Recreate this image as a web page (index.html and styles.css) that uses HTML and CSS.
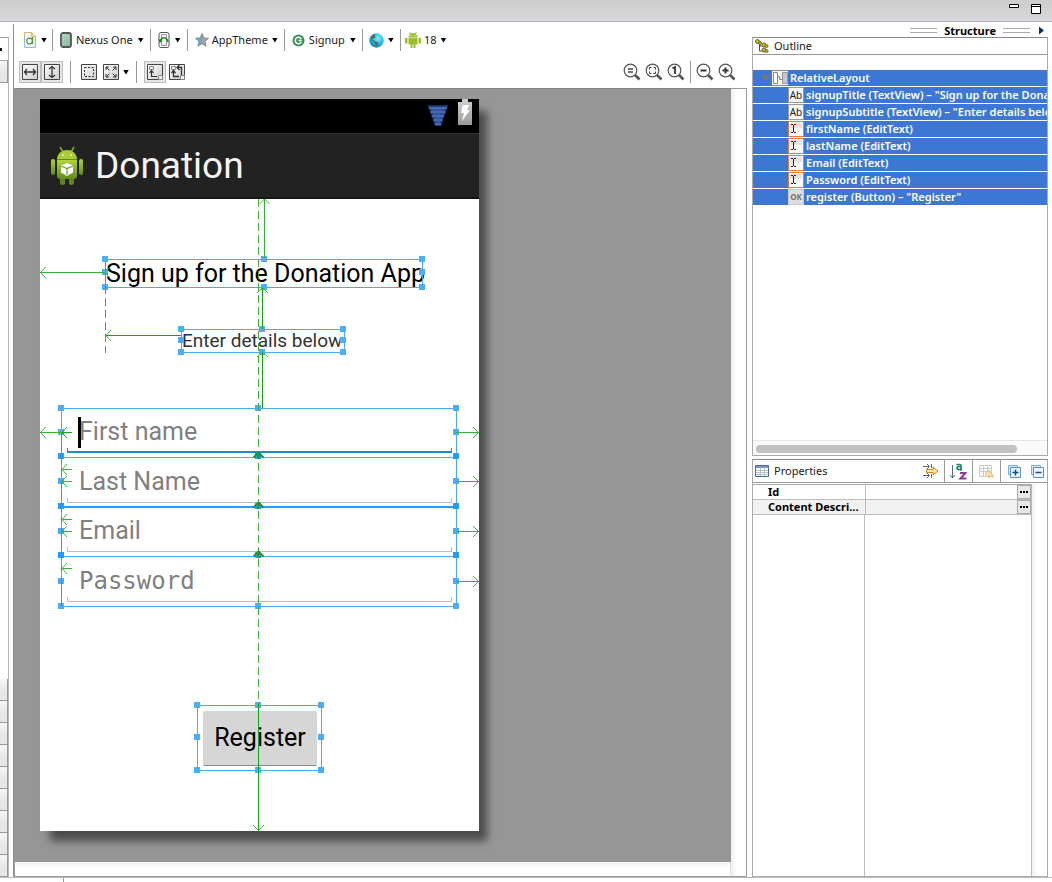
FILE: index.html
```html
<!DOCTYPE html>
<html lang="en">
<head>
<meta charset="utf-8">
<title>Layout editor</title>
<link rel="stylesheet" href="styles.css">
</head>
<body>
<svg class="defs" aria-hidden="true">
  <defs>
    <linearGradient id="tile" x1="0" y1="0" x2="1" y2="1"><stop offset="0" stop-color="#fff"/><stop offset="1" stop-color="#ccc"/></linearGradient>
    <linearGradient id="screen" x1="0" y1="0" x2="1" y2="1"><stop offset="0" stop-color="#b5d8c4"/><stop offset="1" stop-color="#86b79c"/></linearGradient>
    <linearGradient id="droid" x1="0" y1="0" x2="0" y2="1"><stop offset="0" stop-color="#b4d334"/><stop offset="1" stop-color="#5f8a1d"/></linearGradient>
    <radialGradient id="sea" cx=".6" cy=".35" r=".7"><stop offset="0" stop-color="#7ff0ff"/><stop offset=".6" stop-color="#22b4e6"/><stop offset="1" stop-color="#1773b8"/></radialGradient>
    <linearGradient id="batt" x1="0" y1="0" x2="0" y2="1"><stop offset="0" stop-color="#d0d0d0"/><stop offset="1" stop-color="#9b9b9b"/></linearGradient>
    <symbol id="lens" viewBox="0 0 18 18"><path d="M12 12l4.500 4.500" stroke="#555" stroke-width="2.600"/><circle cx="7.500" cy="7.500" r="6.300" fill="#fff" stroke="#555" stroke-width="1.200"/></symbol>
    <symbol id="edit" viewBox="0 0 16 16"><rect x=".5" y=".5" width="15" height="15" rx="1" fill="#fafafa" stroke="#f27935"/><path d="M2 2h12v5H2z" fill="#e4e4e4"/><path d="M3 3.500h2M6 3.500h2M3 11.500h2M6 11.500h2M5.500 4v7" stroke="#222" fill="none"/></symbol>
  </defs>
</svg>

<header class="titlebar">
  <button class="win" aria-label="Minimize"><svg width="10" height="12" viewBox="0 0 10 12"><path d="M.5 2.500h9v3h-9z" fill="#fff" stroke="#000"/></svg></button>
  <button class="win" aria-label="Maximize"><svg width="10" height="12" viewBox="0 0 10 12"><path d="M.5 2.500h9v9h-9zM0 4.500h10" fill="#fff" stroke="#000"/></svg></button>
</header>

<main class="workbench">
  <aside class="palette" aria-label="Palette">
    <div class="palette-head"></div>
    <div class="drawer"></div>
    <div class="palette-space"></div>
    <div class="drawer"></div><div class="drawer"></div><div class="drawer"></div><div class="drawer"></div><div class="drawer"></div><div class="drawer"></div><div class="drawer"></div><div class="drawer"></div><div class="drawer"></div>
  </aside>

  <section class="editor" aria-label="Layout editor">
    <div class="toolbar">
      <button class="menu menu-first" aria-label="Configuration"><svg width="12" height="16" viewBox="0 0 12 16"><path d="M.5.500h7l4 4v11H.5z" fill="#eef3fb" stroke="#9db5d6"/><path d="M.5 5V.500h7l4 4" fill="none" stroke="#e5b36b"/><path d="M7.500.500v4h4z" fill="#f7d9a8" stroke="#e5b36b"/><circle cx="5.500" cy="9" r="2.800" fill="#fff" stroke="#4f9b33" stroke-width="1.200"/><path d="M8.500 5v7" stroke="#4f9b33" stroke-width="1.200"/></svg><i class="arrow"></i></button>
      <button class="menu"><svg width="12" height="16" viewBox="0 0 12 16"><rect x="1" y="1" width="10" height="14" rx="2" fill="url(#screen)" stroke="#555" stroke-width="1.800"/></svg><span>Nexus One</span><i class="arrow"></i></button>
      <button class="menu" aria-label="Orientation"><svg width="12" height="16" viewBox="0 0 12 16"><rect x="1" y=".5" width="10" height="15" rx="2" fill="#fff" stroke="#555"/><path d="M3.500 2.500h5v11h-5z" fill="#f4f4f4" stroke="#999"/><path d="M2.500 9c0-4.500 6.500-4.500 7.500 1" fill="none" stroke="#159015" stroke-width="1.500"/><path d="M0 7.500h5L2 11z" fill="#159015"/></svg><i class="arrow"></i></button>
      <button class="menu menu-theme"><svg width="14" height="14" viewBox="0 0 14 14"><path d="M7 .5l1.900 4.400 4.600.400-3.500 3.100 1.100 4.800L7 10.700l-4.100 2.500L4 8.400.500 5.300l4.600-.400z" fill="#a4a4a4" stroke="#888"/><path d="M7 1v9.500l-3.500 2L4.500 8l-3-2.500 4-.500z" fill="#4fb3d9"/></svg><span>AppTheme</span><i class="arrow"></i></button>
      <button class="menu"><svg width="13" height="13" viewBox="0 0 14 14"><circle cx="7" cy="7" r="6.500" fill="#3c9158"/><path d="M10 5.200A3.500 3.500 0 1 0 10 8.800M10.500 7H7" fill="none" stroke="#fff" stroke-width="1.700"/></svg><span>Signup</span><i class="arrow"></i></button>
      <button class="menu menu-tight" aria-label="Locale"><svg width="15" height="15" viewBox="0 0 15 15"><circle cx="7.500" cy="7.500" r="7.200" fill="url(#sea)"/><path d="M1.500 4c1.500-2 3-3 5-3l-1 2 1.500 1-2 1.500-1 0-.5 1.500 3 1.500 2.500.5.500 1.500-2 3.500-1-.5-.5-3L3 7.500z" fill="#47795f"/></svg><i class="arrow"></i></button>
      <button class="menu menu-last"><svg width="16" height="16" viewBox="0 0 16 16"><path d="M3.500 5.500a4.500 4.500 0 0 1 9 0zM3.500 6h9v6.500h-2V16h-2v-3.500h-1V16h-2v-3.500h-2zM0 6h2.500v5.500H0zM13.500 6H16v5.500h-2.500z" fill="#99c02c"/><path d="M4.500 0l1.500 2M11.500 0L10 2" stroke="#99c02c"/><path d="M5.500 3h1v1h-1zM9.500 3h1v1h-1z" fill="#fff"/></svg><span>18</span><i class="arrow"></i></button>
    </div>

    <div class="toolbar toolbar-second">
      <div class="group">
        <button class="tool on" aria-label="Fill width" aria-pressed="true"><svg width="16" height="16" viewBox="0 0 16 16"><path d="M.5.500h15v15H.5z" fill="url(#tile)" stroke="#444"/><path d="M2.500 8h11M5 5L2.500 8 5 11M11 5l2.500 3-2.500 3" fill="none" stroke="#333" stroke-width="1.300"/></svg></button>
        <button class="tool on" aria-label="Fill height" aria-pressed="true"><svg width="16" height="16" viewBox="0 0 16 16"><path d="M.5.500h15v15H.5z" fill="url(#tile)" stroke="#444"/><path d="M8 2.500v11M5 5l3-2.500L11 5M5 11l3 2.500 3-2.500" fill="none" stroke="#333" stroke-width="1.300"/></svg></button>
      </div>
      <div class="group">
        <button class="tool" aria-label="Margins"><svg width="16" height="16" viewBox="0 0 16 16"><path d="M.5.500h15v15H.5z" fill="url(#tile)" stroke="#444"/><path d="M3.500 3.500h9v9h-9z" fill="none" stroke="#333" stroke-dasharray="2 1.500"/></svg></button>
        <button class="tool" aria-label="Gravity"><svg width="16" height="16" viewBox="0 0 16 16"><path d="M.5.500h15v15H.5z" fill="url(#tile)" stroke="#444"/><path d="M3 3l3.500 3.500M13 3L9.500 6.500M3 13l3.500-3.500M13 13L9.500 9.500M3 6V3h3M10 3h3v3M3 10v3h3M10 13h3v-3" fill="none" stroke="#333"/></svg></button>
        <i class="arrow"></i>
      </div>
      <div class="group group-last">
        <button class="tool on" aria-label="Show structure" aria-pressed="true"><svg width="16" height="16" viewBox="0 0 16 16"><path d="M.5.500h15v15H.5z" fill="url(#tile)" stroke="#444"/><path d="M2.500 2.500h4v3h-4zM11.500 11.500h4v4h-4z" fill="#eee" stroke="#888"/><path d="M4.500 6.500v6H10M2.500 9l2-2.500 2 2.500" fill="none" stroke="#333" stroke-width="1.200"/></svg></button>
        <button class="tool" aria-label="Show constraints"><svg width="16" height="16" viewBox="0 0 16 16"><path d="M.5.500h15v15H.5z" fill="url(#tile)" stroke="#444"/><path d="M2.500 2.500h4v3h-4zM11.500 11.500h4v4h-4z" fill="#eee" stroke="#888"/><path d="M4.500 6.500v6H10M2.500 9l2-2.500 2 2.500M12.500 11V3.500H8.500M10.500 1L8 3.500 10.500 6" fill="none" stroke="#333" stroke-width="1.300"/></svg></button>
      </div>
      <div class="group zooms">
        <button class="tool" aria-label="Emulate real size"><svg width="18" height="18"><use href="#lens"/><path d="M5 6h5M5 9h5" stroke="#444" stroke-width="1.600"/></svg></button>
        <button class="tool" aria-label="Zoom to fit"><svg width="18" height="18"><use href="#lens"/><path d="M4.500 6.500v-2h2M8.500 4.500h2v2M4.500 8.500v2h2M8.500 10.500h2v-2" fill="none" stroke="#444"/></svg></button>
        <button class="tool" aria-label="Zoom to 100%"><svg width="18" height="18"><use href="#lens"/><path d="M5.500 5.500L8 4v7" fill="none" stroke="#333" stroke-width="1.800"/></svg></button>
      </div>
      <div class="group group-last">
        <button class="tool" aria-label="Zoom out"><svg width="18" height="18"><use href="#lens"/><path d="M4.500 7.500h6" stroke="#333" stroke-width="2"/></svg></button>
        <button class="tool" aria-label="Zoom in"><svg width="18" height="18"><use href="#lens"/><path d="M4.500 7.500h6M7.500 4.500v6" stroke="#333" stroke-width="2"/></svg></button>
      </div>
    </div>

    <div class="canvas-frame">
      <div class="canvas">
        <div class="phone">
          <div class="statusbar">
            <svg width="24" height="26" viewBox="0 0 24 26"><path d="M3 5h18l-6.500 19h-5z" fill="#2c4f96" stroke="#16305f" stroke-width="2"/><path d="M3 7h18M4.500 11h15M6 15h12M7.500 19h9M9 23h6" stroke="#4568b4" stroke-width="2.500"/></svg>
            <svg width="14" height="26" viewBox="0 0 14 26"><path d="M4 0h6v3h4v23H0V3h4z" fill="url(#batt)"/><path d="M5 6h6l-2 5h3L4 22l2-8H3z" fill="#fff"/></svg>
          </div>
          <div class="actionbar">
            <svg width="34" height="40" viewBox="0 0 34 40"><path d="M10 1l3 5M24 1l-3 5" stroke="#86a82c" stroke-width="1.500"/><path d="M7 13c1-12 19-12 20 0z" fill="#a9cc35"/><path d="M7 14h20v16q0 3-3 3H10q-3 0-3-3z" fill="url(#droid)"/><rect x="1" y="13" width="4" height="16" rx="2" fill="url(#droid)"/><rect x="29" y="13" width="4" height="16" rx="2" fill="url(#droid)"/><path d="M10 33h5v5q-3 2-5 0zM19 33h5v5q-3 2-5 0z" fill="#60851f"/><path d="M12 9h1.500M20.500 9H22" stroke="#fff" stroke-width="1.600"/><path d="M7 13.500h20" stroke="#648721"/><path d="M17 17l6 2.500v7L17 30l-6-3.500v-7z" fill="#fff"/><path d="M11 20l6 2.500 6-2.500M17 22.500V29" fill="none" stroke="#76982b" stroke-width="1.200"/></svg>
            <span>Donation</span>
          </div>
          <div class="screen">
            <h1 class="signup-title">Sign up for the Donation App</h1>
            <p class="signup-subtitle">Enter details below</p>
            <form class="fields">
              <div class="field field-focus"><input type="text" placeholder="First name" aria-label="First name"><span class="underline"></span></div>
              <div class="field"><input type="text" placeholder="Last Name" aria-label="Last Name"><span class="underline"></span></div>
              <div class="field"><input type="text" placeholder="Email" aria-label="Email"><span class="underline"></span></div>
              <div class="field field-mono"><input type="text" placeholder="Password" aria-label="Password"><span class="underline"></span></div>
              <button type="button" class="register">Register</button>
            </form>
          </div>
          <svg class="guides" viewBox="40 99 439 732" aria-hidden="true">
            <g class="frame">
              <path d="M105.500 259.500h317v28h-317zM181.500 329.500h163v23h-163zM61.500 408.500h395v198h-395zM197.500 705.500h124v65h-124zM61 457.500h395M61 556.500h395"/>
              <path class="frame-strong" d="M61 507h395"/>
            </g>
            <g class="handles">
              <path d="M102 256h6v6h-6zM261 256h6v6h-6zM419 256h6v6h-6zM102 269h6v6h-6zM419 269h6v6h-6zM102 284h6v6h-6zM261 284h6v6h-6zM419 284h6v6h-6z"/>
              <path d="M178 326h6v6h-6zM259 326h6v6h-6zM340 326h6v6h-6zM178 337h6v6h-6zM340 337h6v6h-6zM178 349h6v6h-6zM259 349h6v6h-6zM340 349h6v6h-6z"/>
              <path d="M58 405h6v6h-6zM255 405h6v6h-6zM453 405h6v6h-6zM58 429h6v6h-6zM453 429h6v6h-6zM58 478h6v6h-6zM453 478h6v6h-6zM58 528h6v6h-6zM453 528h6v6h-6zM58 578h6v6h-6zM453 578h6v6h-6zM58 603h6v6h-6zM255 603h6v6h-6zM453 603h6v6h-6z"/>
              <path class="solid" d="M58 453h6v6h-6zM255 453h6v6h-6zM453 453h6v6h-6zM58 503h6v6h-6zM255 503h6v6h-6zM453 503h6v6h-6zM58 552h6v6h-6zM255 552h6v6h-6zM453 552h6v6h-6z"/>
              <path d="M194 702h6v6h-6zM255 702h6v6h-6zM318 702h6v6h-6zM194 734h6v6h-6zM318 734h6v6h-6zM194 767h6v6h-6zM255 767h6v6h-6zM318 767h6v6h-6z"/>
            </g>
            <g class="links">
              <path class="dashed" d="M258.500 199v504M105.500 262v91M61.500 432v174"/>
              <path d="M264.500 258v-59M259.500 204l5-5 5 5"/>
              <path d="M105 272.500H40M45.500 267l-5 5.500 5 5.500M110 267l-5 5.500 5 5.500"/>
              <path class="strong" d="M181 335.500h-75"/><path d="M111 330l-5 5.500 5 5.500"/>
              <path class="strong" d="M262.500 329v-41M262.500 408v-56"/><path d="M257 293l5.500-5 5.500 5M257 357l5.500-5 5.500 5"/>
              <path d="M61 432.500H40M45.500 427l-5 5.500 5 5.500"/>
              <path class="strong" d="M72 432.500H62M67 427l-5 5.500 5 5.500"/>
              <path d="M72 469.500H62M67 464l-5 5.500 5 5.500M72 481.500H62M67 476l-5 5.500 5 5.500M72 519.500H62M67 514l-5 5.500 5 5.500M72 531.500H62M67 526l-5 5.500 5 5.500M72 568.500H62M67 563l-5 5.500 5 5.500"/>
              <path d="M456 432.500h23M473 427l5.500 5.500-5.500 5.500M456 481.500h23M473 476l5.500 5.500-5.500 5.500M456 531.500h23M473 526l5.500 5.500-5.500 5.500M456 581.500h23M473 576l5.500 5.500-5.500 5.500"/>
              <path class="tip" d="M253.500 457.500l5-5 5 5M258.500 452v7M253.500 507.500l5-5 5 5M258.500 502v7M253.500 556.500l5-5 5 5M258.500 551v7"/>
              <path class="strong" d="M258.500 703v128"/><path d="M253 825l5.500 5.500 5.500-5.500"/>
            </g>
          </svg>
        </div>
      </div>
      <div class="scroll-v"></div>
      <div class="scroll-h"></div>
    </div>
  </section>

  <aside class="structure">
    <div class="structure-head"><i class="grip"></i><b>Structure</b><i class="grip"></i><button class="expand" aria-label="Show menu"></button></div>

    <section class="outline">
      <h2 class="view-head"><svg width="14" height="14" viewBox="0 0 14 14"><path d="M4.500 5v7H8M4.500 7H8" fill="none" stroke="#234e8c"/><g fill="#c9bd3c" stroke="#6b6415"><circle cx="2.500" cy="2.500" r="2"/><circle cx="5" cy="4" r="1.500"/><circle cx="9" cy="6" r="2"/><circle cx="11.500" cy="7" r="1.500"/><circle cx="9" cy="11" r="2"/><circle cx="11.500" cy="12" r="1.500"/></g></svg>Outline</h2>
      <ul class="tree">
        <li class="root"><i class="twist"></i><svg width="16" height="16" viewBox="0 0 16 16"><path d="M0 0h16v16H0z" fill="#f4f4f4"/><path d="M1.500 2.500h4v11h-4z" fill="#fff" stroke="#888"/><path d="M10.500 2.500h5v11h-5z" fill="#c8c8c8" stroke="#999"/><path d="M6 6.500h1.500v3H10M0 .500h16M0 15.500h16" fill="none" stroke="#888"/></svg>RelativeLayout</li>
        <li><span class="ab">Ab</span>signupTitle (TextView) – "Sign up for the Donation App"</li>
        <li><span class="ab">Ab</span>signupSubtitle (TextView) – "Enter details below"</li>
        <li><svg width="16" height="16"><use href="#edit"/></svg>firstName (EditText)</li>
        <li><svg width="16" height="16"><use href="#edit"/></svg>lastName (EditText)</li>
        <li><svg width="16" height="16"><use href="#edit"/></svg>Email (EditText)</li>
        <li><svg width="16" height="16"><use href="#edit"/></svg>Password (EditText)</li>
        <li><span class="ok">OK</span>register (Button) – "Register"</li>
      </ul>
      <div class="outline-scroll"><i class="thumb"></i></div>
    </section>

    <section class="properties">
      <div class="view-head props-head">
        <svg width="14" height="12" viewBox="0 0 14 12"><path d="M.5.500h13v11H.5z" fill="#fff" stroke="#51678e"/><path d="M1 1h12v2H1z" fill="#7d96bd"/><path d="M1 5.500h12M1 7.500h12M1 9.500h12M5.500 3v8M9.500 3v8" stroke="#b5bfd0"/></svg>
        <h2>Properties</h2>
        <button class="ptool" aria-label="Advanced"><svg width="16" height="16" viewBox="0 0 16 16"><path d="M0 3.500h6M0 12.500h6M4 1l2.500 2.500L4 6M4 10l2.500 2.500L4 15M8.500 1v4M8.500 11v4" fill="none" stroke="#506c88"/><path d="M3.500 6.500H10V4l5 4-5 4V9.500H3.500z" fill="#fbe5a8" stroke="#c98518"/></svg></button>
        <button class="ptool" aria-label="Sort"><svg width="17" height="17" viewBox="0 0 17 17"><path d="M2.500 2v13M0 12l2.500 3L5 12" fill="none" stroke="#506c88"/><path d="M6.500 1.500h3.500q1 0 1 1V7H12M10.500 3.500H8q-2 1.500 0 3 1.500.500 3-1" fill="none" stroke="#24866b" stroke-width="1.700"/><path d="M10 10h5.500l-5 5.500h6" fill="none" stroke="#8b3c9b" stroke-width="2"/></svg></button>
        <button class="ptool" aria-label="Restore default"><svg width="15" height="15" viewBox="0 0 15 15"><path d="M.5 1.500h12v11H.5zM1 4.500h12M1 7.500h12M4.500 2v10M8.500 2v10" fill="#fafafa" stroke="#ccc"/><path d="M6 10l4-4v2.500q4 0 4 5-1.500-2-4-2V14z" fill="#fae6b6" stroke="#e3bd78"/></svg></button>
        <button class="ptool ptool-plain" aria-label="Expand all"><svg width="13" height="13" viewBox="0 0 13 13"><path d="M.5.500h9v9h-9z" fill="#d6e8f7" stroke="#7eafd4"/><path d="M2.500 2.500h10v10h-10z" fill="#eaf5ff" stroke="#5b90bd"/><path d="M4.500 7.500h6M7.500 4.500v6" stroke="#164e8a" stroke-width="1.500"/></svg></button>
        <button class="ptool ptool-plain" aria-label="Collapse all"><svg width="13" height="13" viewBox="0 0 13 13"><path d="M.5.500h9v9h-9z" fill="#d6e8f7" stroke="#7eafd4"/><path d="M2.500 2.500h10v10h-10z" fill="#eaf5ff" stroke="#5b90bd"/><path d="M4.500 7.500h6" stroke="#164e8a" stroke-width="1.500"/></svg></button>
      </div>
      <div class="sheet">
        <div class="sheet-main">
          <table class="props">
            <tr><th scope="row">Id</th><td><button class="more" aria-label="Edit Id"></button></td></tr>
            <tr class="alt"><th scope="row">Content Descri...</th><td><button class="more" aria-label="Edit Content Description"></button></td></tr>
          </table>
          <div class="sheet-rest"></div>
        </div>
        <div class="sheet-scroll"></div>
      </div>
    </section>
  </aside>
</main>
<footer class="status"></footer>
</body>
</html>
```
FILE: styles.css
```css
* { box-sizing: border-box; }
body {
  margin: 0;
  min-height: 100vh;
  display: flex;
  flex-direction: column;
  background: #fff;
  color: #222;
  font: 11px/16px "Noto Sans", "Open Sans", sans-serif;
  overflow: hidden;
}
button { margin: 0; padding: 0; border: 0; background: none; color: inherit; font: inherit; }
h1, h2, p, ul { margin: 0; padding: 0; font: inherit; list-style: none; }
svg { flex: none; display: block; }
.defs { position: absolute; width: 0; height: 0; }

.titlebar {
  height: 22px;
  display: flex;
  justify-content: flex-end;
  gap: 12px;
  padding: 2px 11px 0 0;
  background: linear-gradient(#cdcdcd, #d8d8d8);
  border-bottom: 1px solid #b4b6c6;
}
.win { height: 12px; }

.workbench {
  flex: 1;
  display: grid;
  grid-template-columns: 9px minmax(0, 1fr) 297px;
  column-gap: 4px;
  padding-right: 4px;
}

.palette { display: flex; flex-direction: column; margin-top: 15px; border-top: 1px solid #999; border-right: 1px solid #b5b5b5; }
.palette-head { height: 23px; border-bottom: 1px solid #aaa; }
.palette-head::before { content: ""; display: block; width: 2px; height: 3px; margin-top: 10px; background: #111; }
.palette-space { flex: 1; }
.drawer { height: 22px; background: linear-gradient(#f6f6f6, #e6e6e6 60%); border: solid #999; border-width: 0 1px 1px 0; }

.editor { display: flex; flex-direction: column; margin-top: 2px; border-left: 1px solid #8d8d8d; }
.toolbar { display: flex; align-items: center; height: 32px; }
.toolbar-second { padding-left: 5px; }
.menu { display: flex; align-items: center; gap: 4px; height: 22px; padding: 0 6px 0 7px; border-right: 1px solid #999; }
.menu-first { padding: 0 5px 0 10px; }
.menu-theme { gap: 3px; }
.menu-tight { gap: 3px; padding-left: 6px; }
.menu-last { gap: 3px; padding-left: 4px; border-right: 0; }
.arrow { width: 6px; height: 5px; flex: none; margin-left: 1px; background: #000; clip-path: polygon(0 0, 100% 0, 50% 100%); }
.group { display: flex; align-items: center; height: 22px; padding-right: 7px; margin-right: 7px; border-right: 1px solid #999; }
.group-last { border-right: 0; }
.zooms { margin-left: auto; margin-right: 3px; padding-right: 3px; }
.zooms + .group { margin-right: 0; padding-right: 9px; }
.tool { width: 22px; height: 22px; display: grid; place-items: center; }
.on { background: #e6e6e6; border: 1px solid #bcbcbc; }

.canvas-frame {
  flex: 1;
  display: grid;
  grid-template-columns: minmax(0, 1fr) 15px;
  grid-template-rows: 1fr 14px;
  border: solid #999;
  border-width: 0 1px 1px 1px;
}
.canvas { padding: 10px 25px 30px; background: #969696; border-top: 1px solid #858585; }
.scroll-v { background: linear-gradient(90deg, #f0f0f0, #fff 40%); border-top: 1px solid #999; grid-row: span 2; }
.scroll-h { background: linear-gradient(#f0f0f0, #fff 40%); border-right: 1px solid #ddd; }

.phone {
  position: relative;
  width: 439px;
  min-height: 732px;
  display: flex;
  flex-direction: column;
  background: #fff;
  box-shadow: 9px 11px 8px -1px rgba(0, 0, 0, .5);
  font-family: Roboto, sans-serif;
}
.statusbar { height: 34px; display: flex; justify-content: flex-end; gap: 8px; padding-right: 7px; background: #000; }
.statusbar svg:first-child { margin-top: 2px; }
.actionbar { height: 66px; display: flex; align-items: center; gap: 11px; padding-left: 10px; background: #222; border-top: 1px solid #333; border-bottom: 2px solid #151515; color: #f3f3f3; font-size: 37px; line-height: 44px; }
.screen { flex: 1; display: flex; flex-direction: column; padding: 60px 23px 0 21px; color: #000; }
.signup-title { height: 29px; padding-left: 45px; font-size: 25px; line-height: 29px; white-space: nowrap; }
.signup-subtitle { height: 23px; margin-top: 41px; padding-left: 121px; color: #333; font-size: 19px; line-height: 24px; white-space: nowrap; }
.fields { display: flex; flex-direction: column; margin-top: 56px; }
.field { position: relative; display: flex; flex-direction: column; height: 50px; padding: 2px 4px 4px 6px; }
.field:nth-child(odd) { height: 49px; }
.field input { flex: 1; min-width: 0; min-height: 0; padding: 6px 0 0 12px; border: 0; outline: 0; background: none; color: #000; font: 25px/30px Roboto, sans-serif; }
.field input::placeholder { color: #808080; opacity: 1; }
.field .underline { height: 5px; border: solid #bbb; border-width: 0 1px 1px; }
.field-mono input { padding-top: 7px; font-family: "DejaVu Sans Mono", monospace; font-size: 24px; }
.field-focus .underline { border-color: #1b8fc6; border-bottom-width: 2px; }
.field-focus::before { content: ""; position: absolute; left: 17px; top: 9px; width: 3px; height: 31px; background: #000; }
.register { align-self: flex-start; width: 114px; height: 55px; margin: 105px 0 0 142px; background: #d6d6d6; border-bottom: 1px solid #888; border-radius: 2px; color: #000; font-size: 25px; }

.guides { position: absolute; inset: 0; width: 439px; height: 732px; fill: none; overflow: visible; }
.frame { stroke: #4aa8f8; }
.frame-strong { stroke: #2a9dfb; stroke-width: 2; }
.handles { fill: #4baefc; }
.solid { fill: #259bfb; }
.links { stroke: #36b336; }
.strong { stroke: #12a512; }
.dashed { stroke-dasharray: 8 4; }
.tip { stroke: #159a36; stroke-width: 2; }

.structure { display: flex; flex-direction: column; min-width: 0; margin-top: 2px; padding-left: 1px; }
.structure-head { height: 13px; display: flex; align-items: center; justify-content: flex-end; gap: 7px; padding-right: 4px; color: #000; line-height: 13px; }
.grip { width: 27px; height: 5px; border: solid #aaa; border-width: 1px 0; }
.expand { width: 5px; height: 8px; margin-left: 2px; background: #003366; clip-path: polygon(0 0, 100% 50%, 0 100%); }
.view-head { display: flex; align-items: center; gap: 5px; height: 17px; padding-left: 2px; border-bottom: 1px solid #999; color: #222; }
.outline { display: flex; flex-direction: column; height: 419px; border: 1px solid #aaa; border-top-color: #888; }
.tree { flex: 1; padding-top: 15px; overflow: hidden; }
.tree li { display: flex; align-items: center; gap: 2px; height: 16px; margin-bottom: 1px; padding-left: 35px; overflow: hidden; background: #3c77d4; color: #fff; font-weight: 600; white-space: nowrap; }
.tree .root { padding-left: 8px; }
.twist { width: 9px; height: 7px; flex: none; background: #777; clip-path: polygon(0 0, 100% 0, 50% 100%); }
.ab, .ok { width: 16px; height: 16px; flex: none; border: 1px solid #999; background: #f6f6f6; color: #222; font-size: 10px; font-weight: 400; line-height: 14px; text-align: center; }
.ok { background: #ddd; border-color: #ccc; color: #777; font-size: 8px; font-weight: 700; }
.outline-scroll { height: 15px; padding: 4px 30px 0 3px; background: #fafafa; border-top: 1px solid #e5e5e5; }
.thumb { display: block; height: 8px; border-radius: 4px; background: #c1c1c1; }

.properties { flex: 1; display: flex; flex-direction: column; margin-top: 3px; border: 1px solid #aaa; border-top-color: #888; }
.props-head { height: 23px; gap: 0; }
.props-head h2 { flex: 1; padding-left: 5px; }
.ptool { width: 28px; height: 22px; display: grid; place-items: center; border-right: 1px solid #999; }
.ptool-plain { width: 23px; padding-left: 3px; border-right: 0; }
.sheet { flex: 1; display: flex; padding-top: 1px; }
.sheet-main { flex: 1; display: flex; flex-direction: column; border-right: 1px solid #bbb; }
.sheet-scroll { width: 15px; background: linear-gradient(90deg, #f1f1f1, #fff 40%); }
.props { width: 100%; border-collapse: collapse; table-layout: fixed; border-top: 1px solid #aaa; }
.props th, .props td { height: 15px; padding: 0; border-bottom: 1px solid #bbb; line-height: 14px; }
.props th { width: 112px; padding-left: 15px; border-right: 1px solid #bbb; color: #000; text-align: left; white-space: nowrap; overflow: hidden; }
.alt { background: #f1f1f1; }
.more { display: block; width: 14px; height: 14px; margin-left: auto; border: 1px solid #aaa; background: repeating-linear-gradient(90deg, #000 0 2px, transparent 2px 3px) center / 8px 2px no-repeat, #e8e8e8; }
.sheet-rest { flex: 1; width: 112px; border-right: 1px solid #bbb; }
.status { height: 5px; border-top: 1px solid #bbb; }
.status::before { content: ""; display: block; width: 1px; height: 4px; margin-left: 63px; background: #999; }
```
